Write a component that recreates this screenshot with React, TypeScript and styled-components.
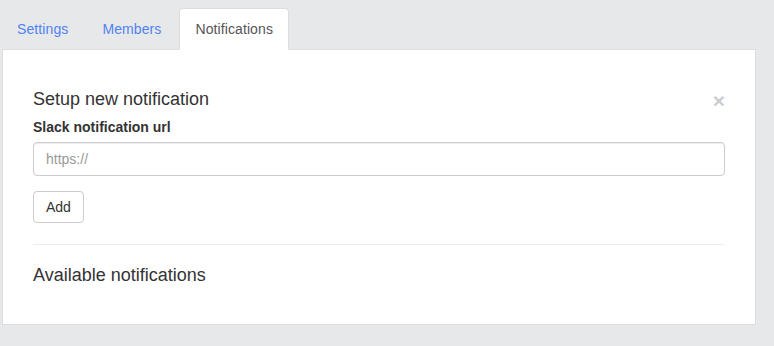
import React from 'react';
import styled, { createGlobalStyle } from 'styled-components';

const GlobalStyle = createGlobalStyle`
  html, body {
    margin: 0;
    padding: 0;
    background: #e7e8ea;
    font-family: "Liberation Sans", Arial, sans-serif;
    color: #333;
  }
  * {
    box-sizing: border-box;
  }
`;

const Page = styled.div`
  padding: 8px 18px 0 2px;
`;

const Tabs = styled.ul`
  display: flex;
  list-style: none;
  margin: 0 0 0 -1px;
  padding: 0;
`;

const Tab = styled.li<{ $active?: boolean }>`
  margin-right: 2px;
  margin-bottom: -1px;
  padding: 10px 15px;
  font-size: 14px;
  line-height: 20px;
  letter-spacing: 0.1px;
  border: 1px solid ${(p) => (p.$active ? '#ddd' : 'transparent')};
  border-bottom-color: transparent;
  border-radius: 4px 4px 0 0;
  background: ${(p) => (p.$active ? '#fff' : 'transparent')};
  color: ${(p) => (p.$active ? '#555' : '#4f82f3')};
  cursor: pointer;
  position: relative;
`;

const Panel = styled.div`
  background: #fff;
  border: 1px solid #ddd;
  padding: 39px 30px 39px;
`;

const HeaderRow = styled.div`
  display: flex;
  justify-content: space-between;
  align-items: flex-start;
`;

const Heading = styled.h4`
  margin: 0;
  font-size: 18px;
  font-weight: 400;
  line-height: 20px;
`;

const Close = styled.span`
  display: block;
  height: 20px;
  font-size: 21px;
  font-weight: 700;
  line-height: 24px;
  color: #000;
  opacity: 0.2;
  cursor: pointer;
`;

const Label = styled.label`
  display: block;
  margin-top: 8px;
  margin-bottom: 5px;
  font-size: 14px;
  font-weight: 700;
  line-height: 20px;
`;

const Input = styled.input`
  display: block;
  width: 100%;
  height: 34px;
  padding: 6px 12px;
  font-family: inherit;
  font-size: 14px;
  color: #555;
  border: 1px solid #ccc;
  border-radius: 4px;
  box-shadow: inset 0 1px 1px rgba(0, 0, 0, 0.075);
  &::placeholder {
    color: #999;
  }
`;

const Button = styled.button`
  display: block;
  margin-top: 15px;
  height: 32px;
  padding: 6px 12px;
  font-family: inherit;
  font-size: 14px;
  line-height: 18px;
  color: #333;
  background: #fff;
  border: 1px solid #ccc;
  border-radius: 4px;
`;

const Divider = styled.hr`
  margin: 21px 0 20px;
  border: 0;
  border-top: 1px solid #eee;
`;

const App: React.FC = () => (
  <>
    <GlobalStyle />
    <Page>
      <Tabs>
        <Tab>Settings</Tab>
        <Tab>Members</Tab>
        <Tab $active>Notifications</Tab>
      </Tabs>
      <Panel>
        <HeaderRow>
          <Heading>Setup new notification</Heading>
          <Close role="button" aria-label="Close">×</Close>
        </HeaderRow>
        <Label>Slack notification url</Label>
        <Input placeholder="https://" />
        <Button>Add</Button>
        <Divider />
        <Heading>Available notifications</Heading>
      </Panel>
    </Page>
  </>
);

export default App;
